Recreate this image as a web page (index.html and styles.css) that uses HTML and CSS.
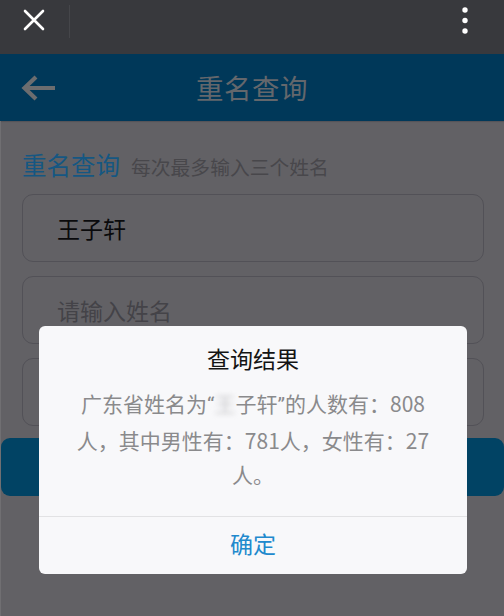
FILE: index.html
```html
<!DOCTYPE html>
<html lang="zh-CN">
<head>
<meta charset="utf-8">
<title>重名查询</title>
<link rel="stylesheet" href="styles.css">
</head>
<body>
<div class="screen">
  <div class="chrome">
    <svg class="close-icon" width="22" height="22" viewBox="0 0 22 22">
      <path d="M2 2 L20 20 M20 2 L2 20" stroke="#ffffff" stroke-width="2.6" stroke-linecap="round"/>
    </svg>
    <span class="chrome-divider"></span>
    <span class="chrome-spacer"></span>
    <svg class="more-icon" width="8" height="30" viewBox="0 0 8 30">
      <circle cx="4" cy="4" r="2.7" fill="#ffffff"/>
      <circle cx="4" cy="14.5" r="2.7" fill="#ffffff"/>
      <circle cx="4" cy="25" r="2.7" fill="#ffffff"/>
    </svg>
  </div>

  <div class="app">
    <header class="appbar">
      <svg class="back-icon" width="36" height="26" viewBox="0 0 36 26">
        <path d="M34 13 H4 M15 2 L3.5 13 L15 24" stroke="#6c6d6f" stroke-width="4.2" fill="none" stroke-linecap="butt" stroke-linejoin="miter"/>
      </svg>
      <h1 class="appbar-title">重名查询</h1>
      <span></span>
    </header>

    <main class="content">
      <div class="form">
        <div class="section-head">
          <h2 class="section-title">重名查询</h2>
          <span class="section-hint">每次最多输入三个姓名</span>
        </div>
        <div class="field">王子轩</div>
        <div class="field placeholder">请输入姓名</div>
        <div class="field placeholder">请输入姓名</div>
      </div>
      <div class="submit">查询</div>
    </main>

    <div class="dialog">
      <div class="dialog-title">查询结果</div>
      <p class="dialog-msg">广东省姓名为<span class="q">“</span><span class="blur">王</span>子轩<span class="q">”</span>的人数有：808人，其中男性有：781人，女性有：27人。</p>
      <div class="dialog-actions">
        <span class="dialog-btn">确定</span>
      </div>
    </div>
  </div>
</div>
</body>
</html>
```

FILE: styles.css
```css
* { box-sizing: border-box; }

html, body {
  margin: 0;
  padding: 0;
  width: 504px;
  height: 616px;
  overflow: hidden;
  background: #626165;
  font-family: "Noto Sans CJK SC", "Noto Sans", sans-serif;
}

.screen {
  width: 504px;
  height: 616px;
  display: flex;
  flex-direction: column;
}

/* browser chrome */
.chrome {
  height: 54px;
  background: #38393d;
  display: flex;
  align-items: flex-start;
  flex: none;
}
.close-icon {
  margin: 9px 0 0 23px;
}
.chrome-divider {
  width: 1px;
  height: 33px;
  margin: 5px 0 0 24px;
  background: #45464a;
}
.chrome-spacer { flex: 1; }
.more-icon {
  margin: 6px 35px 0 0;
}

/* app */
.app {
  position: relative;
  flex: 1;
  display: flex;
  flex-direction: column;
  border-left: 1px solid #706f72;
}
.appbar {
  height: 67px;
  background: #003859;
  display: grid;
  grid-template-columns: 1fr auto 1fr;
  align-items: center;
  flex: none;
  margin-left: -1px;
}
.back-icon {
  margin-left: 21px;
}
.appbar-title {
  margin: 0;
  font-size: 27.5px;
  font-weight: 400;
  color: #64676c;
  letter-spacing: 0.5px;
  line-height: 1;
}

.content {
  flex: 1;
  box-shadow: inset 0 2px 1px -1px #555458;
}
.form {
  padding: 29px 20px 0 21px;
}
.section-head {
  display: flex;
  align-items: baseline;
  gap: 11px;
  height: 30px;
  line-height: 30px;
}
.section-title {
  margin: 0;
  font-size: 24.5px;
  font-weight: 400;
  color: #155782;
}
.section-hint {
  font-size: 19.8px;
  color: #48474b;
}
.field {
  height: 68px;
  margin-top: 14px;
  border: 1.5px solid #525157;
  border-radius: 11px;
  display: flex;
  align-items: center;
  padding-left: 34px;
  font-size: 23px;
  color: #0a0a0c;
}
.field.placeholder { color: #444348; }

.submit {
  height: 58px;
  margin: 12px 0 0 0;
  background: #014364;
  border-radius: 9px;
  display: flex;
  align-items: center;
  justify-content: center;
  font-size: 23px;
  color: #5f7d8e;
}

/* dialog */
.dialog {
  position: absolute;
  left: 38px;
  top: 272px;
  width: 428px;
  background: #f8f8fa;
  border-radius: 6px;
  text-align: center;
  overflow: hidden;
}
.dialog-title {
  padding-top: 15px;
  line-height: 34px;
  font-size: 23px;
  color: #141414;
}
.dialog-msg {
  margin: 11px auto 0;
  width: 362px;
  font-size: 21px;
  line-height: 34.5px;
  color: #8a8a8c;
  padding-bottom: 24px;
}
.q {
  font-family: "Roboto", "Noto Sans", sans-serif;
}
.blur {
  filter: blur(2.5px);
  color: #c8c8ca;
}
.dialog-actions {
  border-top: 1px solid #e2e2e4;
  height: 58px;
  padding-bottom: 4px;
  display: flex;
  align-items: center;
  justify-content: center;
}
.dialog-btn {
  font-size: 23px;
  color: #2189cd;
}
```
